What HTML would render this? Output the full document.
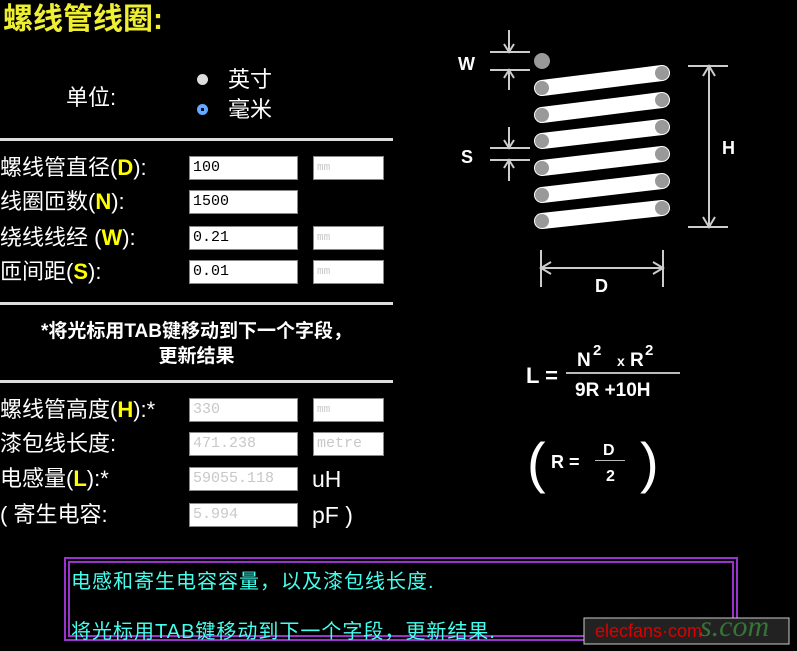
<!DOCTYPE html>
<html><head><meta charset="utf-8"><style>
body{margin:0;width:797px;height:651px;background:#000;overflow:hidden;position:relative;font-family:"Liberation Sans","Noto Sans CJK SC",sans-serif;color:#fff}
.a{position:absolute;white-space:nowrap}
.t{font-size:22px;line-height:24px}
.y{color:#ff0;font-weight:bold}
.hr{position:absolute;left:0;width:393px;height:3px;background:#ddd}
.in{position:absolute;height:24px;background:#fff;border:1px solid #888;box-sizing:border-box;font-family:"Liberation Mono",monospace;font-size:15px;line-height:22px;padding-left:3px;color:#000}
.g{color:#c8c8c8}
.cy{color:#4fe;font-size:20px;letter-spacing:1px}
</style></head><body>
<div class="a y" style="left:3px;top:3px;font-size:30px;line-height:34px;color:#ee3">螺线管线圈:</div>
<div class="a t" style="left:66px;top:86px">单位:</div>
<div class="a" style="left:197px;top:74px;width:11px;height:11px;border-radius:50%;background:#ddd"></div>
<div class="a" style="left:197px;top:104px;width:11px;height:11px;border-radius:50%;background:#6af"></div>
<div class="a" style="left:201px;top:108px;width:3px;height:3px;background:#013"></div>
<div class="a t" style="left:228px;top:68px">英寸</div>
<div class="a t" style="left:228px;top:98px">毫米</div>
<div class="hr" style="top:138px"></div>
<div class="a t" style="left:0;top:156px">螺线管直径(<span class="y">D</span>):</div>
<div class="a t" style="left:0;top:190px">线圈匝数(<span class="y">N</span>):</div>
<div class="a t" style="left:0;top:226px">绕线线经 (<span class="y">W</span>):</div>
<div class="a t" style="left:0;top:260px">匝间距(<span class="y">S</span>):</div>
<div class="in" style="left:189px;top:156px;width:109px">100</div>
<div class="in" style="left:189px;top:190px;width:109px">1500</div>
<div class="in" style="left:189px;top:226px;width:109px">0.21</div>
<div class="in" style="left:189px;top:260px;width:109px">0.01</div>
<div class="in g" style="left:313px;top:156px;width:71px;font-size:11px">mm</div>
<div class="in g" style="left:313px;top:226px;width:71px;font-size:11px">mm</div>
<div class="in g" style="left:313px;top:260px;width:71px;font-size:11px">mm</div>
<div class="hr" style="top:302px"></div>
<div class="a" style="left:0;width:393px;top:319px;text-align:center;font-size:19px;font-weight:bold;line-height:25px;white-space:normal">*将光标用TAB键移动到下一个字段，<br>更新结果</div>
<div class="hr" style="top:380px"></div>
<div class="a t" style="left:0;top:398px">螺线管高度(<span class="y">H</span>):*</div>
<div class="a t" style="left:0;top:432px">漆包线长度:</div>
<div class="a t" style="left:0;top:467px">电感量(<span class="y">L</span>):*</div>
<div class="a t" style="left:0;top:503px">( 寄生电容:</div>
<div class="in g" style="left:189px;top:398px;width:109px">330</div>
<div class="in g" style="left:189px;top:432px;width:109px">471.238</div>
<div class="in g" style="left:189px;top:467px;width:109px">59055.118</div>
<div class="in g" style="left:189px;top:503px;width:109px">5.994</div>
<div class="in g" style="left:313px;top:398px;width:71px;font-size:11px">mm</div>
<div class="in g" style="left:313px;top:432px;width:71px">metre</div>
<div class="a t" style="left:312px;top:467px;font-size:23px">uH</div>
<div class="a t" style="left:312px;top:503px;font-size:23px">pF )</div>
<div class="a" style="left:64px;top:557px;width:674px;height:84px;border:2px solid #93c;box-sizing:border-box"></div>
<div class="a" style="left:68px;top:561px;width:666px;height:76px;border:2px solid #93c;box-sizing:border-box"></div>
<div class="a cy" style="left:71px;top:565px">电感和寄生电容容量，以及漆包线长度.</div>
<div class="a cy" style="left:71px;top:615px">将光标用TAB键移动到下一个字段，更新结果.</div>
<svg class="a" style="left:0;top:0" width="797" height="651">
<g stroke="#ccc" stroke-width="2" fill="none">
<line x1="490" y1="52" x2="530" y2="52"/><line x1="490" y1="70" x2="530" y2="70"/>
<path d="M509 30V52M504 44L509 52L514 44M509 90V70M504 78L509 70L514 78"/>
<line x1="490" y1="148" x2="530" y2="148"/><line x1="490" y1="160" x2="530" y2="160"/>
<path d="M509 127V148M504 140L509 148L514 140M509 181V160M504 168L509 160L514 168"/>
<line x1="688" y1="66" x2="728" y2="66"/><line x1="688" y1="227" x2="728" y2="227"/>
<path d="M709 66V227M703 76L709 66L715 76M703 217L709 227L715 217"/>
<line x1="541" y1="250" x2="541" y2="287"/><line x1="663" y1="250" x2="663" y2="287"/>
<path d="M541 268H663M551 262L541 268L551 274M653 262L663 268L653 274"/>
</g>
<g>
<circle cx="542" cy="61" r="8" fill="#999"/>
<g stroke="#fff" stroke-width="16" stroke-linecap="round">
<line x1="542" y1="88" x2="662" y2="73"/><line x1="542" y1="115" x2="662" y2="100"/><line x1="542" y1="141" x2="662" y2="127"/><line x1="542" y1="168" x2="662" y2="154"/><line x1="542" y1="195" x2="662" y2="181"/><line x1="542" y1="221" x2="662" y2="208"/>
</g>
<g fill="#999">
<circle cx="542" cy="88" r="7"/><circle cx="542" cy="115" r="7"/><circle cx="542" cy="141" r="7"/><circle cx="542" cy="168" r="7"/><circle cx="542" cy="195" r="7"/><circle cx="542" cy="221" r="7"/>
<circle cx="662" cy="73" r="7"/><circle cx="662" cy="100" r="7"/><circle cx="662" cy="127" r="7"/><circle cx="662" cy="154" r="7"/><circle cx="662" cy="181" r="7"/><circle cx="662" cy="208" r="7"/>
</g>
</g>
<g fill="#fff" font-family="Liberation Sans" font-weight="bold">
<text x="458" y="70" font-size="18">W</text>
<text x="461" y="163" font-size="18">S</text>
<text x="722" y="154" font-size="18">H</text>
<text x="595" y="292" font-size="18">D</text>
<text x="526" y="383" font-size="22">L =</text>
<text x="577" y="366" font-size="19">N</text><text x="593" y="355" font-size="15">2</text>
<text x="617" y="366" font-size="14">x</text><text x="630" y="366" font-size="19">R</text><text x="645" y="355" font-size="15">2</text>
<rect x="566" y="372" width="114" height="2" fill="#bbb"/>
<text x="575" y="396" font-size="19">9R +10H</text>
<text x="527" y="482" font-size="56" font-weight="normal">(</text>
<text x="640" y="482" font-size="56" font-weight="normal">)</text>
<text x="551" y="468" font-size="18">R =</text>
<text x="603" y="455" font-size="16">D</text>
<rect x="595" y="460" width="30" height="1" fill="#bbb"/>
<text x="606" y="481" font-size="16">2</text>
</g>
<rect x="584" y="618" width="205" height="26" fill="#222" stroke="#ccc" stroke-width="1"/>
<text x="595" y="637" font-size="18" fill="#d00" font-family="Liberation Sans">elecfans·com</text>
<text x="700" y="636" font-size="30" fill="#4a4" opacity="0.6" font-family="Liberation Serif" font-style="italic">s.com</text>
</svg>
</body></html>
